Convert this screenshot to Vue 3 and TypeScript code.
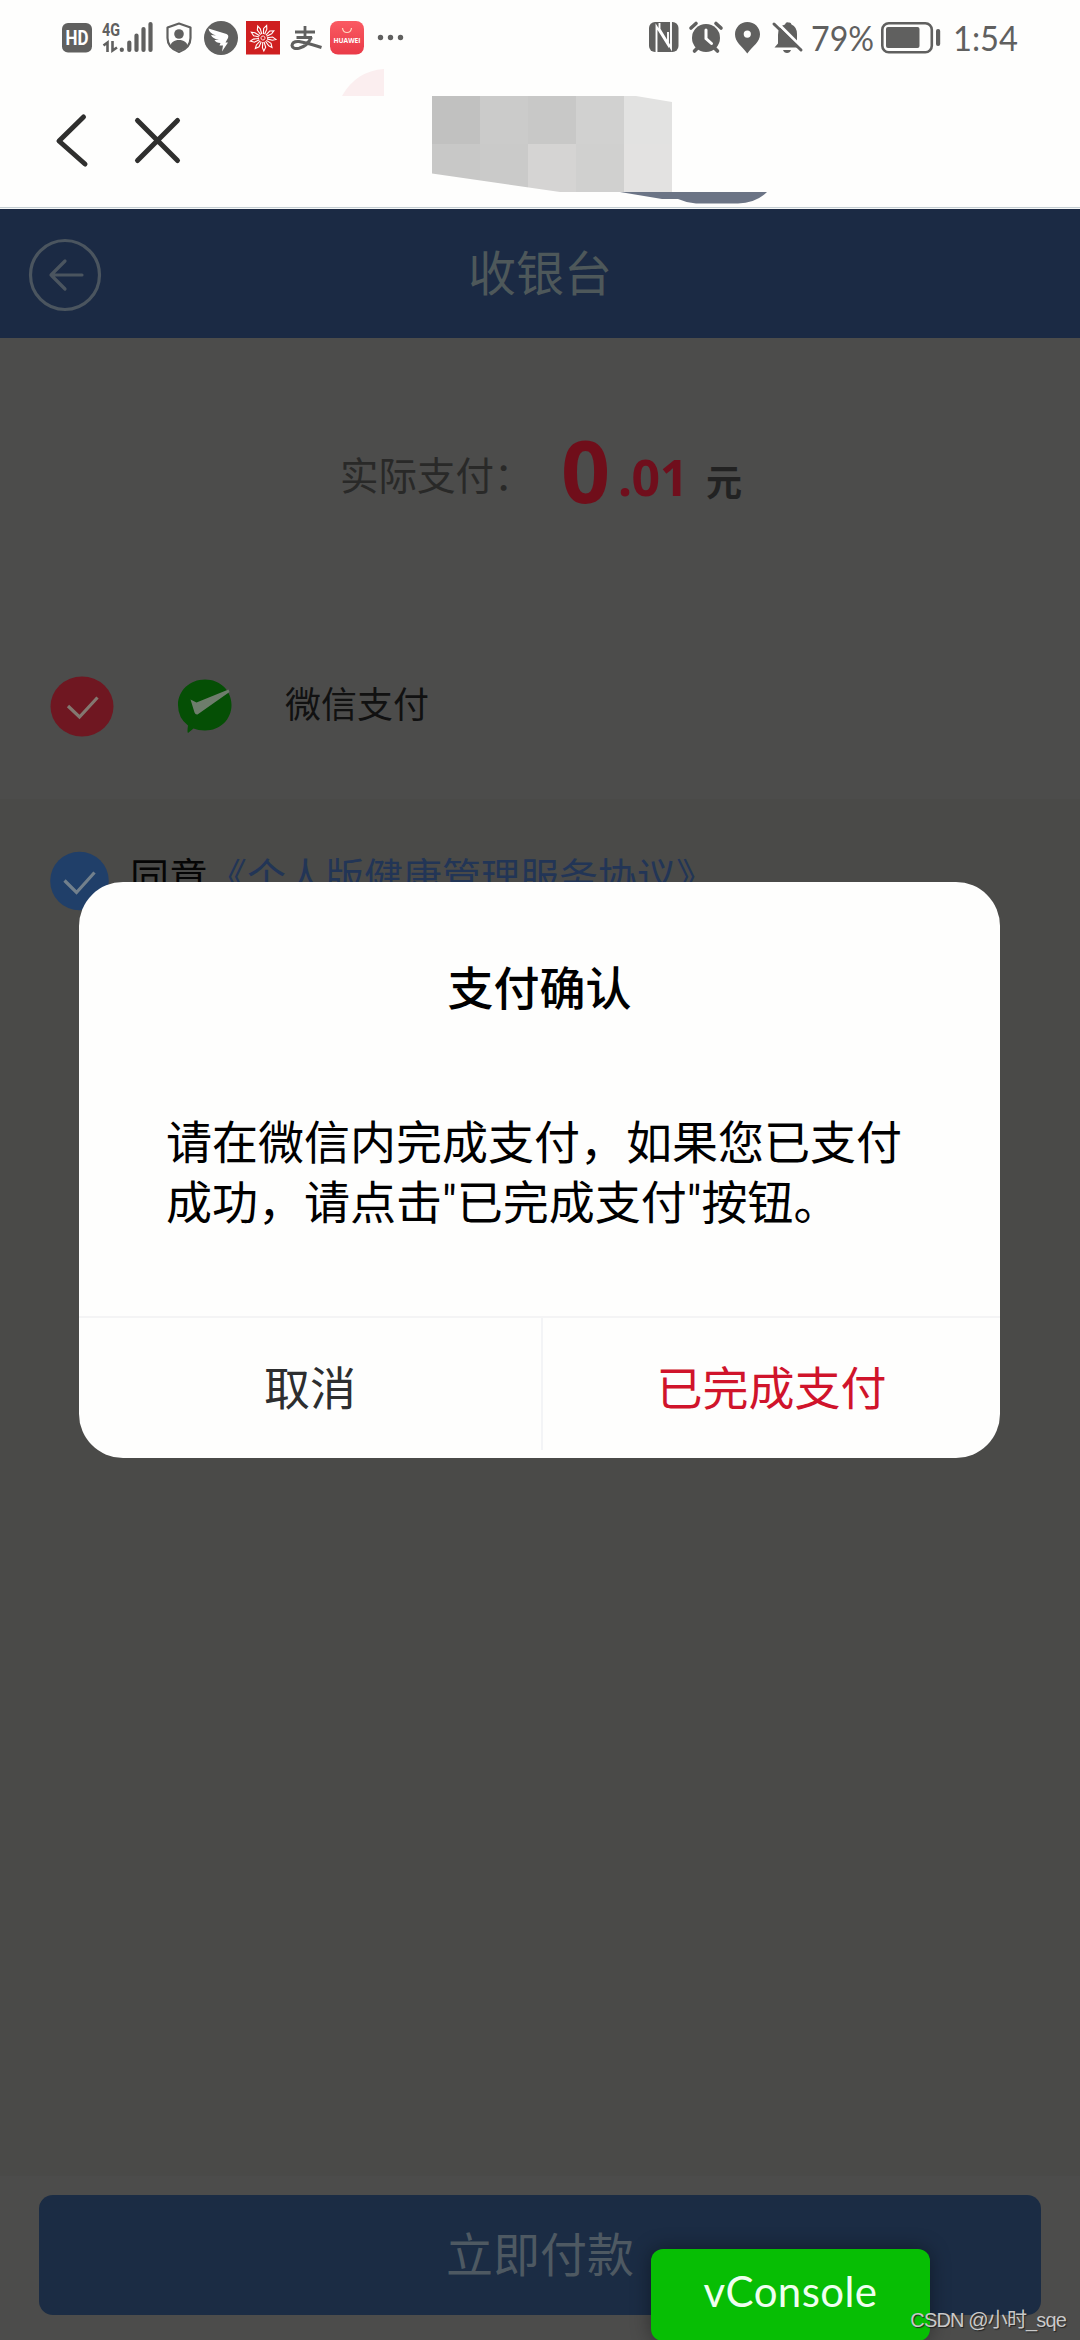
<script setup lang="ts">
import { ref } from 'vue'

const rays: number[] = Array.from({ length: 9 }, (_, i) => i * 40)
const tiles: string[] = [
  '#c1c1c0', '#cbcbca', '#c8c8c7', '#d1d1d0', '#e2e2e1',
  '#c8c8c7', '#cacac9', '#d5d4d3', '#d0d0cf', '#e3e2e1',
]
const open = ref(true)
</script>

<template>
  <div class="screen">
    <div class="top">
      <div class="status">
        <svg width="40" height="40" viewBox="56 18 40 40">
          <rect x="62" y="23" width="30" height="29.500" rx="6" fill="#60605f" />
          <text x="65.500" y="45" textLength="23" lengthAdjust="spacingAndGlyphs" class="hd">HD</text>
        </svg>
        <svg width="64" height="40" viewBox="96 18 64 40">
          <text x="102" y="35.500" textLength="18" lengthAdjust="spacingAndGlyphs" class="g4">4G</text>
          <g stroke="#60605f" stroke-width="2.600" fill="none">
            <path d="M103.500 45.500L107.500 42.500V52M112.500 41V50.500L117 47.500" />
          </g>
          <g stroke="#60605f" stroke-width="4.200" stroke-linecap="round">
            <path d="M121.800 49.500V50M129.300 42.500V50M136.500 35.500V50M143.500 29V50M150.500 24V50" />
          </g>
        </svg>
        <svg width="38" height="40" viewBox="160 18 38 40">
          <path d="M179 23.500L190.500 27.500V38C190.500 45 186 49.500 179 52C172 49.500 167.500 45 167.500 38V27.500Z" fill="none" stroke="#60605f" stroke-width="2.200" stroke-linejoin="round" />
          <circle cx="179" cy="34" r="4.800" fill="#60605f" />
          <path d="M170.500 46C171 42.500 174 40 179 40S187 42.500 187.500 46Q184 50 179 51Q174 50 170.500 46Z" fill="#60605f" />
        </svg>
        <svg width="44" height="40" viewBox="198 18 44 40">
          <circle cx="221" cy="38" r="17" fill="#60605f" />
          <path d="M208.500 28.500L226.500 34Q229 35 228 38L225.500 42.500H228L222 51.500L223 45.500H219.500L220.500 43Q216 43 214.500 40L219 40Q212.500 38.500 211 35L216 35.500Q209 33 208.500 28.500Z" fill="#fff" />
        </svg>
        <svg width="44" height="40" viewBox="242 18 44 40">
          <rect x="246" y="21" width="34" height="33.500" fill="#cf1f20" />
          <g transform="translate(263 38) rotate(14)" fill="none" stroke="#fff" stroke-width="1.100">
            <path v-for="r in rays" :key="r" :transform="`rotate(${r})`" d="M-0.600 -4L-1.700 -9.500L0.500 -13L1.600 -9.500L0.600 -4" />
            <circle r="2" stroke-width="0.800" />
          </g>
        </svg>
        <svg width="40" height="40" viewBox="286 18 40 40">
          <g fill="none" stroke="#60605f" stroke-width="2.800">
            <path d="M295 32H315M305 26V38M296.500 37.500H312" />
            <path d="M311.500 37Q307 46.500 299 48.300Q292.500 49.300 292 45.500Q292.500 41 299 41.500Q308 43 321.500 47.500" stroke-width="3" />
          </g>
        </svg>
        <svg width="44" height="40" viewBox="326 18 44 40">
          <defs>
            <linearGradient id="hw" x1="0" y1="0" x2="0" y2="1">
              <stop offset="0" stop-color="#fa5a62" />
              <stop offset="1" stop-color="#ea3b48" />
            </linearGradient>
          </defs>
          <rect x="330" y="21" width="34" height="33.500" rx="8" fill="url(#hw)" />
          <path d="M342.500 28Q343 32.500 347 32.500T351.500 28" fill="none" stroke="#ffd9c0" stroke-width="1.200" />
          <text x="333.500" y="43.200" textLength="27" lengthAdjust="spacingAndGlyphs" class="hw">HUAWEI</text>
        </svg>
        <svg width="40" height="40" viewBox="370 18 40 40">
          <g fill="#60605f">
            <circle cx="380.500" cy="37.500" r="2.700" />
            <circle cx="390.500" cy="37.500" r="2.700" />
            <circle cx="400.500" cy="37.500" r="2.700" />
          </g>
        </svg>
        <span class="grow" />
        <svg width="40" height="40" viewBox="644 18 40 40">
          <rect x="649" y="22" width="29.500" height="30" rx="6" fill="#60605f" />
          <path d="M656.500 52V26.500L668 45V32M659.500 23V29L671 48V22" fill="none" stroke="#fff" stroke-width="1.900" />
        </svg>
        <svg width="44" height="40" viewBox="684 18 44 40">
          <circle cx="706" cy="38" r="14" fill="#60605f" />
          <path d="M691 28L696 23.500M721 28L716 23.500M697 48.500L694.500 51M715 48.500L717.500 51" stroke="#60605f" stroke-width="3.600" stroke-linecap="round" />
          <path d="M706 30V38.500L711.500 43.500" fill="none" stroke="#fff" stroke-width="3" stroke-linecap="round" />
        </svg>
        <svg width="40" height="40" viewBox="728 18 40 40">
          <path fill-rule="evenodd" d="M747.300 22C754.500 22 760 27.500 760 34.300C760 42 753 46 747.300 53.500C741.500 46 735 42 735 34.300C735 27.500 740.500 22 747.300 22ZM747.300 30.500A3.600 3.600 0 1 0 747.300 37.700A3.600 3.600 0 1 0 747.300 30.500Z" fill="#60605f" />
        </svg>
        <svg width="38" height="40" viewBox="768 18 38 40">
          <path d="M774.500 47.500L778 43.500V35Q778 26 785 24.500Q786 21.500 788.500 22.500Q791 22 791.500 24.500Q797 27 797 34V42L800 47.500Z" fill="#60605f" />
          <path d="M783 50H791Q790 53 787 53T783 50Z" fill="#60605f" />
          <path d="M776 21.500L803.500 49" stroke="#fff" stroke-width="3" />
          <path d="M774 24L801 50" stroke="#60605f" stroke-width="3" stroke-linecap="round" />
        </svg>
        <svg class="tall" width="70" height="56" viewBox="806 10 70 56">
          <text x="811" y="51" textLength="63" lengthAdjust="spacingAndGlyphs" class="num">79%</text>
        </svg>
        <svg width="70" height="40" viewBox="876 18 70 40">
          <rect x="882.300" y="23.300" width="49.500" height="29" rx="6.500" fill="none" stroke="#60605f" stroke-width="2.600" />
          <rect x="886" y="27" width="33.500" height="21" rx="2" fill="#60605f" />
          <rect x="936" y="29" width="4.200" height="17" rx="2" fill="#60605f" />
        </svg>
        <svg class="tall" width="80" height="56" viewBox="946 10 80 56">
          <text x="953" y="51" textLength="65" lengthAdjust="spacingAndGlyphs" class="num">1:54</text>
        </svg>
      </div>

      <div class="nav">
        <svg width="44" height="60" viewBox="50 111 44 60">
          <path d="M83.500 117L59 141L85 164" class="ink" />
        </svg>
        <svg width="50" height="60" viewBox="132 111 50 60">
          <path d="M137.500 120.500L177.500 160.500M177.500 120.500L137.500 160.500" class="ink" />
        </svg>
      </div>

      <svg class="mosaic" width="460" height="140" viewBox="330 68 460 140">
        <defs>
          <clipPath id="brush"><path d="M432 96H636L672 102V192H560L432 173.500Z" /></clipPath>
        </defs>
        <path d="M342 96Q356 71 384 69V96Z" fill="#fbeeef" />
        <g clip-path="url(#brush)">
          <rect v-for="(c, i) in tiles" :key="i" :x="432 + (i % 5) * 48" :y="96 + Math.floor(i / 5) * 48" width="48" height="48" :fill="c" />
        </g>
        <path d="M620 192H767Q756 203 738 203.500H696Q687 203 678 199H662Z" fill="#6b7485" />
      </svg>
    </div>

    <div class="page">
      <header class="bar">
        <svg class="back" width="76" height="76" viewBox="27 236 76 76">
          <circle cx="65" cy="275" r="34.500" />
          <path d="M82 275H51M65 261L51 275L65 289" stroke-linejoin="round" />
        </svg>
        <h1>收银台</h1>
      </header>

      <section class="card">
        <div class="amount">
          <span class="label">实际支付：</span>
          <span class="int">0</span>
          <span class="dec">.01</span>
          <span class="unit">元</span>
        </div>
        <div class="method">
          <svg width="64" height="64" viewBox="50 674 64 64">
            <ellipse cx="82" cy="706.500" rx="31.500" ry="30" fill="#6f1721" />
            <path d="M68 706L79.500 717L97.500 697.500" fill="none" stroke="#837870" stroke-width="3.200" />
          </svg>
          <svg class="wx" width="60" height="60" viewBox="175 677 60 60">
            <path d="M205 680.500C220 680.500 231.500 691.500 231.500 706S220 731.500 205 731.500Q198 731.500 193.500 729.500L188 734Q187 733.500 188 726.500Q178 719 178 706C178 691.500 190 680.500 205 680.500Z" fill="#054f05" />
            <path d="M190.500 700.500L196.500 703.500L228.500 690.500L229.500 693L197.500 715.500Q195.500 716 194.500 713.500Z" fill="#6e7d6c" />
          </svg>
          <span>微信支付</span>
        </div>
      </section>

      <section class="agree">
        <svg width="60" height="60" viewBox="49 851 60 60">
          <circle cx="79.500" cy="881" r="29.300" fill="#203f69" />
          <path d="M64.500 880.500L76.500 892.500L94.500 872.500" fill="none" stroke="#72808c" stroke-width="3.200" />
        </svg>
        <span>同意<a>《个人版健康管理服务协议》</a></span>
      </section>

      <footer class="foot">
        <button class="pay">立即付款</button>
      </footer>
    </div>

    <div v-if="open" class="dialog">
      <h2>支付确认</h2>
      <p>请在微信内完成支付，如果您已支付<br />成功，请点击<q>"</q>已完成支付<q>"</q>按钮。</p>
      <div class="actions">
        <button @click="open = false">取消</button>
        <i />
        <button class="ok" @click="open = false">已完成支付</button>
      </div>
    </div>

    <div class="vc">vConsole</div>
    <div class="mark">CSDN @小时_sqe</div>
  </div>
</template>

<style>
body { margin: 0; }
</style>

<style scoped>
.screen {
  position: relative;
  display: flex;
  flex-direction: column;
  width: 1080px;
  height: 2340px;
  overflow: hidden;
  background: #4a4a48;
  font-family: "Noto Sans CJK SC", sans-serif;
}
h1, h2, p { margin: 0; font-weight: 400; }
svg { display: block; flex: none; }
button { border: 0; padding: 0; background: none; font: inherit; color: inherit; }

.top {
  position: relative;
  height: 209px;
  box-sizing: border-box;
  border-bottom: 1px solid #f4f6f6;
  background: linear-gradient(#c4ced3, #c4ced3) 0 207px / 100% 1px no-repeat #fefefd;
}
.status { display: flex; align-items: center; height: 56px; padding: 10px 54px 0 56px; }
.grow { flex: 1; }
.hd { font: 700 20px Roboto, sans-serif; fill: #fff; }
.g4 { font: 700 19px Roboto, sans-serif; fill: #60605f; }
.hw { font: 700 7.500px "Open Sans", sans-serif; fill: #fff; }
.num { font: 400 35px Lato, sans-serif; fill: #60605f; }
.nav { display: flex; gap: 38px; padding: 45px 0 0 50px; }
.ink { fill: none; stroke: #2f2f2e; stroke-width: 5; stroke-linecap: round; stroke-linejoin: round; }
.mosaic { position: absolute; left: 330px; top: 68px; }

.page { flex: 1; display: flex; flex-direction: column; }
.bar {
  display: flex;
  align-items: center;
  height: 129px;
  padding: 0 27px;
  background: #1b2a44;
}
.back { fill: none; stroke: #4b555f; stroke-width: 3.200; stroke-linecap: round; }
.bar h1 {
  flex: 1;
  margin-right: 76px;
  padding-bottom: 7px;
  text-align: center;
  font-size: 48px;
  line-height: 60px;
  color: #4e585a;
}

.card {
  height: 461px;
  box-sizing: border-box;
  padding-top: 72px;
  background: #4c4c4b;
}
.amount { display: flex; align-items: flex-start; height: 132px; padding-left: 340px; line-height: 120px; }
.label { width: 221px; margin-top: 3px; font-size: 38.500px; color: #292928; }
.int { width: 57px; font: 700 86px/120px "Noto Sans", sans-serif; color: #700e1a; }
.dec { width: 88px; margin-top: 7px; font: 700 50px/120px "Noto Sans", sans-serif; color: #700e1c; letter-spacing: -0.500px; }
.unit { margin-top: 10px; font-size: 36px; font-weight: 700; color: #222; }
.method { display: flex; align-items: center; height: 64px; padding: 132px 0 0 50px; }
.wx { margin-left: 61px; }
.method span { margin: -8px 0 0 50px; font-size: 36px; line-height: 50px; color: #111; }

.agree { display: flex; align-items: center; height: 60px; padding: 52px 0 0 49px; }
.agree span { margin: -14px 0 0 21px; font-size: 39px; line-height: 56px; color: #050505; white-space: nowrap; }
.agree a { color: #223556; }

.foot {
  height: 164px;
  box-sizing: border-box;
  margin-top: auto;
  padding: 19px 39px 25px;
  background: #4c4c4b;
}
.pay {
  display: block;
  width: 100%;
  height: 120px;
  padding-bottom: 7px;
  border-radius: 14px;
  background: #1b2c44;
  color: #4e5962;
  font-size: 47px;
}

.dialog {
  position: absolute;
  left: 79px;
  top: 882px;
  display: flex;
  flex-direction: column;
  width: 921px;
  height: 576px;
  border-radius: 44px;
  background: #fefefd;
  color: #000;
}
.dialog h2 { padding-top: 73px; text-align: center; font-size: 46px; line-height: 60px; font-weight: 500; }
.dialog p { padding: 94px 0 0 87px; font-size: 46px; line-height: 60px; white-space: nowrap; }
.dialog q { quotes: none; font-family: Roboto, sans-serif; line-height: 1; }
.actions { display: flex; flex: 1; margin-top: 87px; border-top: 2px solid #f4f4f5; color: #2d2e2f; }
.actions button { flex: none; width: 462px; padding-bottom: 6px; font-size: 46px; }
.actions i { width: 2px; height: 132px; background: #f3f4f6; }
.actions .ok { width: 457px; color: #d0142b; }

.vc {
  position: absolute;
  left: 651px;
  top: 2249px;
  width: 279px;
  height: 92px;
  border-radius: 12px;
  background: #07be04;
  box-shadow: 0 0 20px rgba(0, 0, 0, 0.400);
  color: #effff0;
  font: 400 42px/84px Lato, sans-serif;
  letter-spacing: 0.400px;
  text-align: center;
}
.mark {
  position: absolute;
  right: 14px;
  bottom: 4px;
  font: 400 20px/32px "Liberation Sans", "Noto Sans CJK SC", sans-serif;
  letter-spacing: -0.850px;
  color: #c9c9c9;
  text-shadow: 1px 1px 1px #222;
}
</style>
